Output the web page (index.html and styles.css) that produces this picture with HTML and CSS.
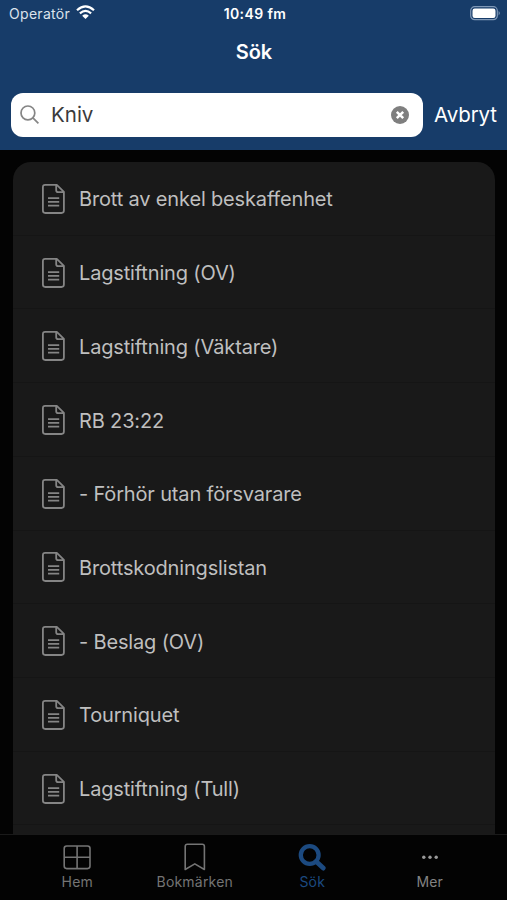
FILE: index.html
```html
<!DOCTYPE html>
<html lang="sv">
<head>
<meta charset="utf-8">
<title>Sök</title>
<link rel="stylesheet" href="styles.css">
</head>
<body>
<svg class="defs" aria-hidden="true">
  <symbol id="doc" viewBox="0 0 23 30">
    <path d="M3.200 .9H14.800L21.900 7.900V26.600Q21.900 29 19.500 29H3.300Q.9 29 .9 26.600V3.200Q.9 .9 3.200 .9ZM14.200 1.200V6.200Q14.200 8.100 16.100 8.100H21.700M6 14.100H17.200M6 17.900H17.200M6 21.700H17.200"/>
  </symbol>
</svg>
<div class="app">
  <header class="header">
    <div class="status">
      <div class="carrier"><span>Operatör</span>
        <svg class="wifi" viewBox="0 0 19 15"><path d="M1 5.200Q9.500-2.500 18 5.200M3.900 8.300Q9.500 3.400 15.100 8.300" fill="none" stroke="#fff" stroke-width="2.200"/><path d="M6.200 10.700Q9.500 7.900 12.800 10.700L9.500 14Z" fill="#fff"/></svg>
      </div>
      <time class="clock">10:49 fm</time>
      <div class="power"><svg class="battery" viewBox="0 0 31 15"><rect x=".7" y=".7" width="26.600" height="13" rx="4" fill="none" stroke="#7f98b7" stroke-width="1.200"/><rect x="2.500" y="2.500" width="23" height="9.400" rx="2.200" fill="#fff"/><path d="M28.600 5Q31 7.200 28.600 9.400Z" fill="#7f98b7"/></svg></div>
    </div>
    <h1 class="title">Sök</h1>
    <div class="searchbar">
      <div class="field">
        <svg class="lens" viewBox="0 0 20 20"><circle cx="7.900" cy="7.900" r="6.900"/><path d="M12.900 12.900L18.400 18.400"/></svg>
        <span class="query">Kniv</span>
        <svg class="clear" viewBox="0 0 18 18"><circle cx="9" cy="9" r="9" fill="#7f7f7f"/><path d="M5.800 5.800L12.200 12.200M12.200 5.800L5.800 12.200" stroke="#fff" stroke-width="2.500"/></svg>
      </div>
      <span class="cancel">Avbryt</span>
    </div>
  </header>
  <main class="content">
    <ul class="results">
      <li><svg class="doc"><use href="#doc"/></svg><span>Brott av enkel beskaffenhet</span></li>
      <li><svg class="doc"><use href="#doc"/></svg><span>Lagstiftning (OV)</span></li>
      <li><svg class="doc"><use href="#doc"/></svg><span>Lagstiftning (Väktare)</span></li>
      <li><svg class="doc"><use href="#doc"/></svg><span>RB 23:22</span></li>
      <li><svg class="doc"><use href="#doc"/></svg><span>- Förhör utan försvarare</span></li>
      <li><svg class="doc"><use href="#doc"/></svg><span>Brottskodningslistan</span></li>
      <li><svg class="doc"><use href="#doc"/></svg><span>- Beslag (OV)</span></li>
      <li><svg class="doc"><use href="#doc"/></svg><span>Tourniquet</span></li>
      <li><svg class="doc"><use href="#doc"/></svg><span>Lagstiftning (Tull)</span></li>
    </ul>
  </main>
  <nav class="tabs">
    <div class="tab"><svg viewBox="0 0 28 28"><rect x="1.200" y="3" width="25.800" height="22.600" rx="2.500"/><path d="M14.100 3V25.600M1.200 14.300H27"/></svg><span>Hem</span></div>
    <div class="tab"><svg viewBox="0 0 28 28"><path d="M4.200 26.500V3.400Q4.200 1.200 6.400 1.200H21.200Q23.400 1.200 23.400 3.400V26.500L13.800 20.900Z"/></svg><span>Bokmärken</span></div>
    <div class="tab active"><svg viewBox="0 0 28 28"><circle cx="11.700" cy="12" r="8.900" stroke-width="4.300"/><path d="M18.200 18.500L25.200 25.100" stroke-width="4.800" stroke-linecap="round"/></svg><span>Sök</span></div>
    <div class="tab more"><svg viewBox="0 0 28 28"><circle cx="7.800" cy="14.300" r="1.700"/><circle cx="14" cy="14.300" r="1.700"/><circle cx="20.200" cy="14.300" r="1.700"/></svg><span>Mer</span></div>
  </nav>
</div>
</body>
</html>
```

FILE: styles.css
```css
* { box-sizing: border-box; }
body { margin: 0; background: #030303; font-family: Inter, "Liberation Sans", sans-serif; }
.defs { position: absolute; width: 0; height: 0; }
.app { display: flex; flex-direction: column; height: 900px; overflow: hidden; }

.header { flex: none; height: 150px; background: #173c69; color: #fff; }
.status { display: grid; grid-template-columns: 1fr auto 1fr; align-items: center; height: 28px; padding: 0 6px 2px 9px; }
.carrier { display: flex; align-items: center; gap: 6px; font-size: 14px; letter-spacing: .3px; color: #dce3ec; }
.wifi { width: 19px; height: 15px; margin-top: -1px; }
.clock { font-size: 14px; font-weight: 600; letter-spacing: .4px; }
.power { display: flex; justify-content: flex-end; }
.battery { width: 31px; height: 15px; }
.title { margin: 0; height: 48px; padding-left: 1px; line-height: 48px; text-align: center; font-size: 20px; font-weight: 600; letter-spacing: -.1px; }
.searchbar { display: flex; align-items: center; padding: 16.500px 10px 0 11px; }
.field { display: flex; align-items: center; width: 412px; height: 44px; padding: 0 14px 0 9px; background: #fff; border-radius: 12px; }
.lens { width: 20px; height: 20px; fill: none; stroke: #858585; stroke-width: 1.700; }
.query { flex: 1; margin-left: 11px; font-size: 20.500px; letter-spacing: 0; color: #3a3a3c; }
.clear { width: 18px; height: 18px; }
.cancel { margin-left: 11px; font-size: 20.500px; letter-spacing: -.1px; white-space: nowrap; }

.content { flex: 1; min-height: 0; overflow: hidden; padding: 12px 12px 0 13px; }
.results { margin: 0; padding: 0; list-style: none; height: 700px; background: #191919; border-radius: 18px; }
.results li { display: flex; align-items: center; gap: 14px; height: 73.720px; padding-left: 29px; border-bottom: 1px solid #151515; font-size: 20px; letter-spacing: -.16px; color: #bfbfbf; white-space: nowrap; }
.results span { padding-top: 2px; }
.doc { width: 23px; height: 30px; margin-top: 1px; fill: none; stroke: #858585; stroke-width: 1.800; stroke-linejoin: round; }

.tabs { flex: none; display: flex; height: 66px; padding: 8px 18.500px 0; border-top: 1px solid #1a1a1a; background: #030303; }
.tab { flex: 1; display: flex; flex-direction: column; align-items: center; color: #747474; font-size: 14px; letter-spacing: .2px; line-height: 20px; }
.tab svg { width: 28px; height: 28px; fill: none; stroke: currentColor; stroke-width: 1.600; stroke-linejoin: round; }
.tab span { margin-top: 1px; }
.tab.active { color: #1c4a80; }
.tab.more { color: #828282; }
.tab.more svg { fill: #999; stroke: none; }
```
